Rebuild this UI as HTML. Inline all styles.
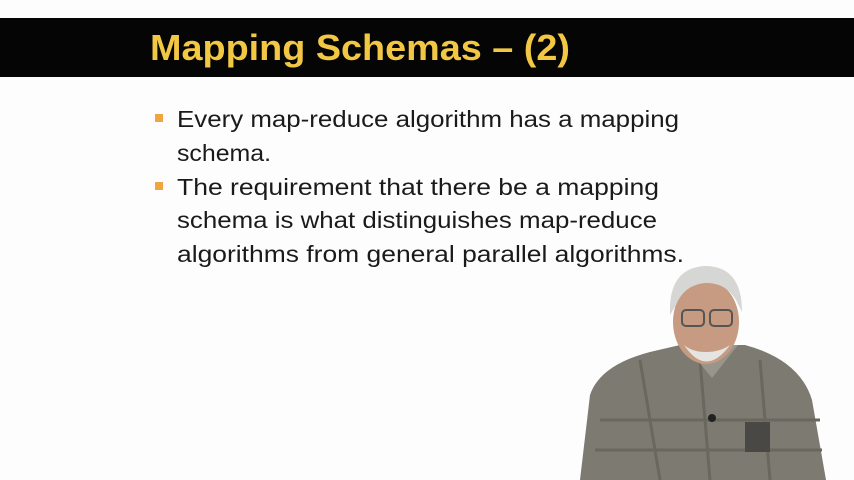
<!DOCTYPE html>
<html><head><style>
body{margin:0;width:854px;height:480px;overflow:hidden;background:#fff;}
</style></head><body>
<svg width="854" height="480" xmlns="http://www.w3.org/2000/svg" style="display:block">
<rect width="854" height="480" fill="#fdfdfd"/>
<rect y="18" width="854" height="59" fill="#050505"/>
<text x="150" y="60" font-family="Liberation Sans" font-weight="bold" font-size="36" fill="#f2c744" textLength="420" lengthAdjust="spacingAndGlyphs">Mapping Schemas – (2)</text>
<g font-family="Liberation Sans" font-size="23" fill="#1a1a1a">
<rect x="155" y="114" width="8" height="8" fill="#f0a640"/>
<text x="177" y="127" textLength="502" lengthAdjust="spacingAndGlyphs">Every map-reduce algorithm has a mapping</text>
<text x="177" y="161" textLength="94" lengthAdjust="spacingAndGlyphs">schema.</text>
<rect x="155" y="182" width="8" height="8" fill="#f0a640"/>
<text x="177" y="195" textLength="482" lengthAdjust="spacingAndGlyphs">The requirement that there be a mapping</text>
<text x="177" y="228" textLength="480" lengthAdjust="spacingAndGlyphs">schema is what distinguishes map-reduce</text>
<text x="177" y="262" textLength="507" lengthAdjust="spacingAndGlyphs">algorithms from general parallel algorithms.</text>
</g>
<!-- person -->
<path d="M580 480 L590 395 Q600 365 650 352 L680 345 L745 345 Q800 360 812 400 L826 480 Z" fill="#7d7a72"/>
<path d="M640 360 L660 480 M700 360 L710 480 M760 360 L770 480 M600 420 L820 420 M595 450 L822 450" stroke="#6a675f" stroke-width="3"/>
<path d="M685 345 L712 378 L738 345 Z" fill="#9a958a"/>
<ellipse cx="706" cy="322" rx="33" ry="42" fill="#c79a82"/>
<path d="M670 315 Q668 268 705 266 Q742 266 742 312 L736 300 Q725 282 705 283 Q684 285 676 305 Z" fill="#d6d6d4"/>
<path d="M684 345 Q706 378 730 345 Q720 352 706 352 Q692 352 684 345 Z" fill="#e6e4e0"/>
<rect x="682" y="310" width="22" height="16" rx="4" fill="none" stroke="#555" stroke-width="2"/>
<rect x="710" y="310" width="22" height="16" rx="4" fill="none" stroke="#555" stroke-width="2"/>
<rect x="745" y="422" width="25" height="30" fill="#4a4844"/>
<circle cx="712" cy="418" r="4" fill="#222"/>
</svg>
</body></html>
